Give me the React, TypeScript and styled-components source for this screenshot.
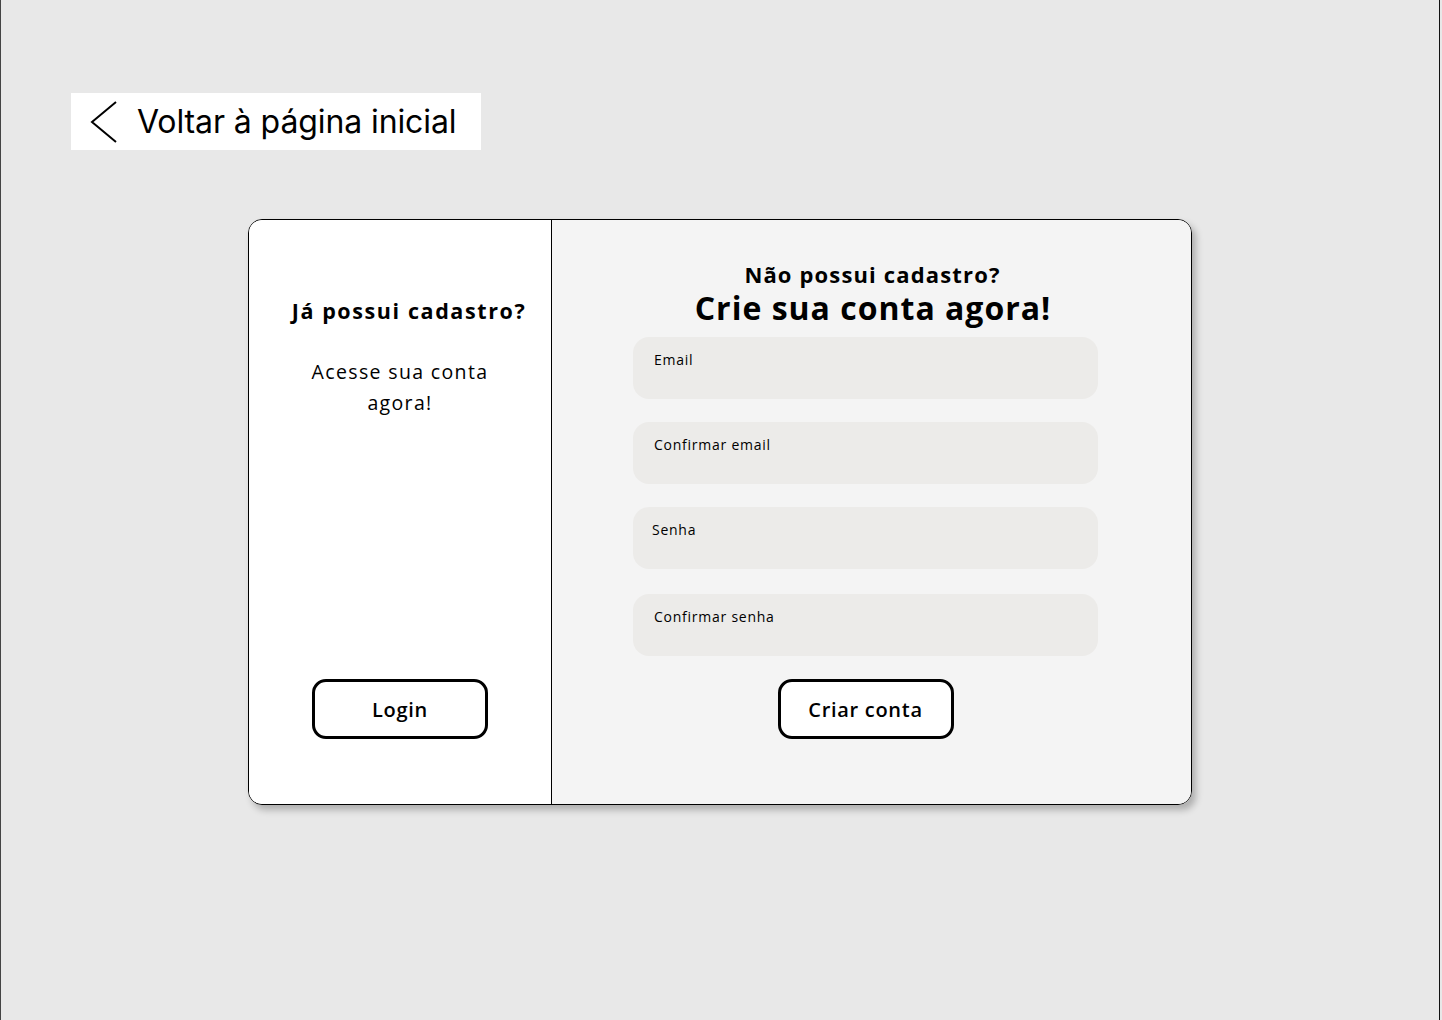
import React from "react";
import styled, { createGlobalStyle } from "styled-components";

const Global = createGlobalStyle`
  html, body { margin: 0; padding: 0; background: #e8e8e8; }
  * { box-sizing: border-box; }
`;

const HEAD = `"Open Sans", "Noto Sans", sans-serif`;

const Page = styled.div`
  width: 1440px;
  min-height: 1020px;
  background: #e8e8e8;
  border-left: 1px solid #444;
  border-right: 1px solid #111;
  padding: 93px 0 0 70px;
  display: flex;
  flex-direction: column;
  align-items: flex-start;
`;

const BackButton = styled.a`
  display: flex;
  align-items: center;
  gap: 18px;
  width: 410px;
  height: 57px;
  background: #ffffff;
  padding: 0 0 0 18px;
  color: #000;
  text-decoration: none;
  font-family: Inter, sans-serif;
  font-size: 32px;
  font-weight: 400;
  letter-spacing: -0.1px;
  cursor: pointer;
`;

const Card = styled.div`
  margin: 69px 0 0 177px;
  width: 944px;
  height: 586px;
  border: 1px solid #000;
  border-radius: 14px;
  overflow: hidden;
  display: grid;
  grid-template-columns: 303px 1fr;
  box-shadow: 4px 5px 7px rgba(0, 0, 0, 0.25);
`;

const LeftPanel = styled.section`
  background: #ffffff;
  border-right: 1px solid #000;
  display: flex;
  flex-direction: column;
  align-items: center;
  padding: 75px 0 65px;
`;

const RightPanel = styled.section`
  background: #f4f4f4;
  display: flex;
  flex-direction: column;
  align-items: center;
  padding: 40px 0 64px;
`;

const SideTitle = styled.h2`
  margin: 0;
  padding-left: 18px;
  font-family: ${HEAD};
  font-weight: 700;
  font-size: 21.5px;
  line-height: 32px;
  letter-spacing: 1.6px;
  white-space: nowrap;
`;

const SideText = styled.p`
  margin: 29px 0 0;
  width: 200px;
  text-align: center;
  font-family: ${HEAD};
  font-size: 19.5px;
  line-height: 31px;
  font-weight: 400;
  letter-spacing: 1.35px;
`;

const Spacer = styled.div`
  flex: 1;
`;

const OutlineButton = styled.button`
  width: 176px;
  height: 60px;
  border: 3px solid #000;
  border-radius: 14px;
  background: #ffffff;
  font-family: ${HEAD};
  font-weight: 600;
  font-size: 20px;
  letter-spacing: 0.7px;
  color: #000;
  cursor: pointer;
`;

const Kicker = styled.div`
  font-family: ${HEAD};
  font-weight: 700;
  font-size: 22px;
  line-height: 28px;
  letter-spacing: 1.15px;
  padding-left: 2px;
`;

const BigTitle = styled.h1`
  margin: 0 0 9px;
  font-family: ${HEAD};
  font-weight: 700;
  font-size: 32px;
  line-height: 40px;
  letter-spacing: 1px;
  padding-left: 3px;
`;

const Form = styled.form`
  display: flex;
  flex-direction: column;
  align-items: center;
  gap: 23px;
  margin: 0 0 0 -12px;
`;

const Field = styled.label<{ $inset?: number; $shift?: number }>`
  display: block;
  width: 465px;
  height: 62px;
  margin-top: ${(p) => p.$shift ?? 0}px;
  background: #ecebe9;
  border-radius: 16px;
  padding: 14px 0 0 ${(p) => p.$inset ?? 21}px;
  font-family: ${HEAD};
  font-size: 14px;
  font-weight: 500;
  line-height: 18px;
  letter-spacing: 0.75px;
  color: #000;
`;

const Chevron = () => (
  <svg width="30" height="44" viewBox="0 0 30 44" fill="none">
    <path d="M27 2 L3 22 L27 42" stroke="#000" strokeWidth="2" />
  </svg>
);

export default function App() {
  return (
    <>
      <Global />
      <Page>
        <BackButton>
          <Chevron />
          Voltar à página inicial
        </BackButton>
        <Card>
          <LeftPanel>
            <SideTitle>Já possui cadastro?</SideTitle>
            <SideText>Acesse sua conta agora!</SideText>
            <Spacer />
            <OutlineButton type="button">Login</OutlineButton>
          </LeftPanel>
          <RightPanel>
            <Kicker>Não possui cadastro?</Kicker>
            <BigTitle>Crie sua conta agora!</BigTitle>
            <Form onSubmit={(e) => e.preventDefault()}>
              <Field>Email</Field>
              <Field>Confirmar email</Field>
              <Field $inset={19}>Senha</Field>
              <Field $shift={2}>Confirmar senha</Field>
              <OutlineButton type="submit">Criar conta</OutlineButton>
            </Form>
          </RightPanel>
        </Card>
      </Page>
    </>
  );
}
